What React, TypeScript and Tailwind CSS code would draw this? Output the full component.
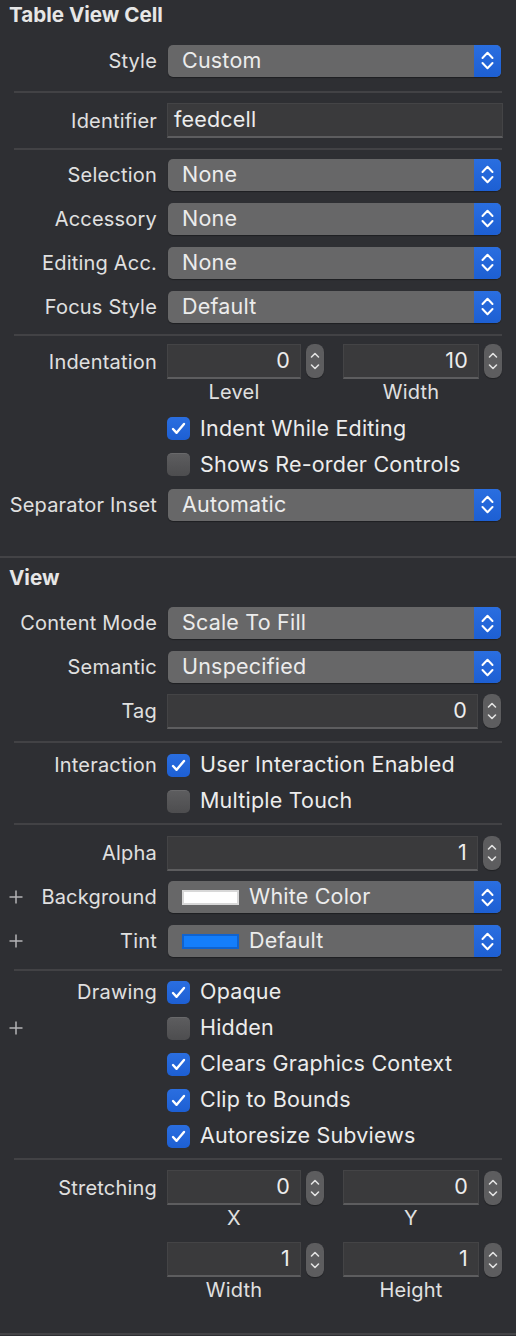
import type { ReactNode } from "react";

// ─── PRIMITIVES ──────────────────────────────────────────────────────────────

function PopupArrows() {
	return (
		<svg width="13" height="19" viewBox="0 0 13 19" fill="none" stroke="white" strokeWidth="2" strokeLinecap="round" strokeLinejoin="round">
			<path d="M1.5 7 L6.5 1.8 L11.5 7" />
			<path d="M1.5 12 L6.5 17.2 L11.5 12" />
		</svg>
	);
}

function StepperArrows() {
	return (
		<svg width="10" height="20" viewBox="0 0 10 20" fill="none" stroke="#e2e2e2" strokeWidth="1.6" strokeLinecap="round" strokeLinejoin="round">
			<path d="M1.5 6 L5 2.5 L8.5 6" />
			<path d="M1.5 14 L5 17.5 L8.5 14" />
		</svg>
	);
}

function Popup({ children }: { children: ReactNode }) {
	return (
		<div className="ml-[1px] flex h-[32px] w-[333px] overflow-hidden rounded-[5px] bg-[#676768] shadow-[0_1px_1px_rgba(0,0,0,0.35)]">
			<div className="flex flex-1 items-center gap-[10px] pl-[14px] text-[21.5px] text-[#ececec]">{children}</div>
			<div className="flex w-[27px] items-center justify-center bg-gradient-to-b from-[#2a6ee0] to-[#1d5fd3]">
				<PopupArrows />
			</div>
		</div>
	);
}

function Field({ value, width, align = "right" }: { value: string; width: string; align?: "left" | "right" }) {
	return (
		<div
			className={`flex h-[35px] ${width} items-center border border-[#444446] border-b-2 border-b-[#5d5d5f] bg-[#3a3a3c] text-[21.5px] text-[#ececec] ${
				align === "right" ? "justify-end pr-[10px]" : "pl-[6px]"
			}`}
		>
			{value}
		</div>
	);
}

function Stepper() {
	return (
		<div className="flex h-[34px] w-[18px] items-center justify-center rounded-[8px] bg-[#5d5d5f] shadow-[0_1px_1px_rgba(0,0,0,0.3)]">
			<StepperArrows />
		</div>
	);
}

function Checkbox({ checked }: { checked: boolean }) {
	if (checked) {
		return (
			<div className="flex h-[23px] w-[23px] items-center justify-center rounded-[5px] bg-gradient-to-b from-[#2a6ee0] to-[#1d5fd3]">
				<svg width="15" height="13" viewBox="0 0 15 13" fill="none" stroke="white" strokeWidth="2.4" strokeLinecap="round" strokeLinejoin="round">
					<path d="M2 7 L5.6 10.8 L13 2" />
				</svg>
			</div>
		);
	}
	return <div className="h-[23px] w-[23px] rounded-[5px] border-t border-[#69696b] bg-gradient-to-b from-[#5d5d5f] to-[#4d4d4f]" />;
}

function Plus() {
	return (
		<svg width="14" height="14" viewBox="0 0 14 14" stroke="#b4b4b6" strokeWidth="1.5">
			<path d="M7 0.5 V13.5 M0.5 7 H13.5" />
		</svg>
	);
}

// ─── ROWS ────────────────────────────────────────────────────────────────────

function Row({ label, plus, height = "h-[44px]", children }: { label?: string; plus?: boolean; height?: string; children: ReactNode }) {
	return (
		<div className={`flex ${height} items-center`}>
			<div className="relative flex w-[157px] justify-end text-[#e0e0e0]">
				{plus && (
					<span className="absolute left-[9px] top-1/2 -translate-y-1/2">
						<Plus />
					</span>
				)}
				{label}
			</div>
			<div className="ml-[10px]">{children}</div>
		</div>
	);
}

function CheckRow({ label, text, checked, plus }: { label?: string; text: string; checked: boolean; plus?: boolean }) {
	return (
		<Row label={label} plus={plus} height="h-[36px]">
			<div className="flex items-center gap-[10px] text-[21.5px] text-[#ececec]">
				<Checkbox checked={checked} />
				{text}
			</div>
		</Row>
	);
}

function PairFields({ a, b, la, lb, gapTop }: { a: string; b: string; la: string; lb: string; gapTop: string }) {
	return (
		<div className={gapTop}>
			<div className="flex h-[35px] items-center">
				<div className="w-[167px]" />
				<Field value={a} width="w-[134px]" />
				<div className="ml-[5px]">
					<Stepper />
				</div>
				<div className="ml-[19px]">
					<Field value={b} width="w-[136px]" />
				</div>
				<div className="ml-[5px]">
					<Stepper />
				</div>
			</div>
			<div className="flex h-[26px] items-center text-[#e0e0e0]">
				<div className="w-[167px]" />
				<div className="w-[134px] text-center">{la}</div>
				<div className="w-[42px]" />
				<div className="w-[136px] text-center">{lb}</div>
			</div>
		</div>
	);
}

function Separator({ className }: { className: string }) {
	return <div className={`ml-[14px] h-[2px] w-[488px] bg-[#424245] ${className}`} />;
}

// ─── PAGE ────────────────────────────────────────────────────────────────────

export default function App() {
	return (
		<div className="h-[1336px] w-[516px] bg-[#2e2f33] text-[20px] tracking-[0.2px] font-['Inter','Liberation_Sans',sans-serif] leading-none">
			<div className="pl-[9px] pt-[5px] text-[20.6px] font-bold tracking-normal text-[#e6e6e6]">Table View Cell</div>

			<div className="mt-[13px]">
				<Row label="Style">
					<Popup>Custom</Popup>
				</Row>
			</div>
			<Separator className="mt-[8px]" />
			<div className="mt-[6px]">
				<Row label="Identifier">
					<Field value="feedcell" width="w-[336px]" align="left" />
				</Row>
			</div>
			<Separator className="mt-[5px]" />
			<div className="mt-[3px]">
				<Row label="Selection">
					<Popup>None</Popup>
				</Row>
				<Row label="Accessory">
					<Popup>None</Popup>
				</Row>
				<Row label="Editing Acc.">
					<Popup>None</Popup>
				</Row>
				<Row label="Focus Style">
					<Popup>Default</Popup>
				</Row>
			</div>
			<Separator className="mt-[5px]" />

			<div className="relative">
				<div className="absolute left-0 top-[9px] flex h-[35px] w-[157px] items-center justify-end text-[#e0e0e0]">Indentation</div>
				<PairFields a="0" b="10" la="Level" lb="Width" gapTop="pt-[8px]" />
			</div>
			<div className="mt-[6px]">
				<CheckRow text="Indent While Editing" checked />
				<CheckRow text="Shows Re-order Controls" checked={false} />
				<Row label="Separator Inset">
					<Popup>Automatic</Popup>
				</Row>
			</div>

			<div className="mt-[29px] h-[2px] w-full bg-[#434346]" />
			<div className="pl-[9px] pt-[10px] text-[20.6px] font-bold tracking-normal text-[#e6e6e6]">View</div>

			<div className="mt-[13px]">
				<Row label="Content Mode">
					<Popup>Scale To Fill</Popup>
				</Row>
				<Row label="Semantic">
					<Popup>Unspecified</Popup>
				</Row>
				<Row label="Tag">
					<div className="flex items-center">
						<Field value="0" width="w-[311px]" />
						<div className="ml-[5px]">
							<Stepper />
						</div>
					</div>
				</Row>
			</div>
			<Separator className="mt-[8px]" />
			<div className="mt-[4px]">
				<CheckRow label="Interaction" text="User Interaction Enabled" checked />
				<CheckRow text="Multiple Touch" checked={false} />
			</div>
			<Separator className="mt-[4px]" />
			<div className="mt-[6px]">
				<Row label="Alpha">
					<div className="flex items-center">
						<Field value="1" width="w-[311px]" />
						<div className="ml-[5px]">
							<Stepper />
						</div>
					</div>
				</Row>
				<Row label="Background" plus>
					<Popup>
						<span className="h-[15px] w-[57px] border-2 border-[#d8d8d8] bg-white" />
						White Color
					</Popup>
				</Row>
				<Row label="Tint" plus>
					<Popup>
						<span className="h-[15px] w-[57px] border-2 border-[#0f63d0] bg-[#147efb]" />
						Default
					</Popup>
				</Row>
			</div>
			<Separator className="mt-[6px]" />
			<div className="mt-[3px]">
				<CheckRow label="Drawing" text="Opaque" checked />
				<CheckRow text="Hidden" checked={false} plus />
				<CheckRow text="Clears Graphics Context" checked />
				<CheckRow text="Clip to Bounds" checked />
				<CheckRow text="Autoresize Subviews" checked />
			</div>
			<Separator className="mt-[4px]" />

			<div className="relative">
				<div className="absolute left-0 top-[10px] flex h-[35px] w-[157px] items-center justify-end text-[#e0e0e0]">Stretching</div>
				<PairFields a="0" b="0" la="X" lb="Y" gapTop="pt-[10px]" />
			</div>
			<PairFields a="1" b="1" la="Width" lb="Height" gapTop="pt-[11px]" />

			<div className="mt-[30px] h-[2px] w-full bg-[#434346]" />
		</div>
	);
}
